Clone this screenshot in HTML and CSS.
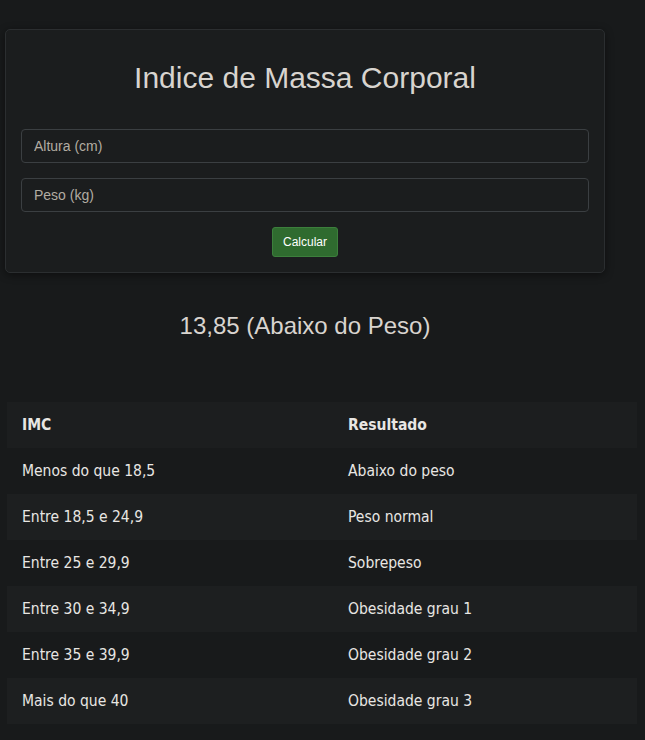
FILE: index.html
```html
<!DOCTYPE html>
<html lang="pt">
<head>
<meta charset="utf-8">
<title>IMC</title>
<link rel="stylesheet" href="styles.css">
</head>
<body>
<main class="page">
  <section class="card">
    <h1 class="title">Indice de Massa Corporal</h1>
    <form class="form">
      <input class="field" type="text" placeholder="Altura (cm)">
      <input class="field" type="text" placeholder="Peso (kg)">
      <div class="actions"><button class="btn" type="button">Calcular</button></div>
    </form>
  </section>
  <p class="result">13,85 (Abaixo do Peso)</p>
  <table class="table">
    <thead>
      <tr><th class="c1">IMC</th><th>Resultado</th></tr>
    </thead>
    <tbody>
      <tr><td>Menos do que 18,5</td><td>Abaixo do peso</td></tr>
      <tr><td>Entre 18,5 e 24,9</td><td>Peso normal</td></tr>
      <tr><td>Entre 25 e 29,9</td><td>Sobrepeso</td></tr>
      <tr><td>Entre 30 e 34,9</td><td>Obesidade grau 1</td></tr>
      <tr><td>Entre 35 e 39,9</td><td>Obesidade grau 2</td></tr>
      <tr><td>Mais do que 40</td><td>Obesidade grau 3</td></tr>
    </tbody>
  </table>
</main>
</body>
</html>
```
FILE: styles.css
```css
html, body {
  margin: 0;
  padding: 0;
  background: #181a1b;
  color: #e8e6e3;
}
.page {
  padding: 29px 8px 20px 5px;
}
.card {
  width: 600px;
  box-sizing: border-box;
  background: #1b1d1e;
  border: 1px solid #2b2e30;
  border-radius: 5px;
  box-shadow: 0 2px 8px rgba(0,0,0,0.45);
  padding: 0 15px 15px;
}
.title {
  margin: 0;
  padding-top: 28px;
  height: 99px;
  box-sizing: border-box;
  text-align: center;
  font-family: "Liberation Sans", Arial, sans-serif;
  font-weight: 400;
  font-size: 30px;
  line-height: 40px;
  color: #d8d4cf;
}
.form {
  display: flex;
  flex-direction: column;
  gap: 15px;
}
.field {
  display: block;
  width: 100%;
  box-sizing: border-box;
  height: 34px;
  margin: 0;
  padding: 0 12px;
  background: #1b1d1e;
  border: 1px solid #3b3f42;
  border-radius: 4px;
  font-family: "Liberation Sans", Arial, sans-serif;
  font-size: 14px;
  color: #e8e6e3;
}
.field::placeholder {
  color: #b2aca2;
}
.actions {
  display: flex;
  justify-content: center;
}
.btn {
  height: 30px;
  padding: 0 10px;
  background: #2f6b2f;
  border: 1px solid #3c7f3c;
  border-radius: 3px;
  color: #ffffff;
  font-family: "Liberation Sans", Arial, sans-serif;
  font-size: 12px;
}
.result {
  width: 600px;
  margin: 38px 0 0;
  text-align: center;
  font-family: "Liberation Sans", Arial, sans-serif;
  font-size: 24px;
  line-height: 30px;
  color: #d8d4cf;
}
.table {
  margin: 61px 0 0 2px;
  width: 630px;
  border-collapse: collapse;
  font-family: "DejaVu Sans Condensed", "DejaVu Sans", sans-serif;
  font-size: 15.5px;
  color: #e8e6e3;
}
.table th, .table td {
  height: 46px;
  padding: 0 15px;
  text-align: left;
  vertical-align: middle;
}
.table th {
  font-weight: 700;
}
.c1 {
  width: 296px;
}
.table thead tr {
  background: #1c1e1f;
}
.table tbody tr:nth-child(even) {
  background: #1d1f20;
}
```
